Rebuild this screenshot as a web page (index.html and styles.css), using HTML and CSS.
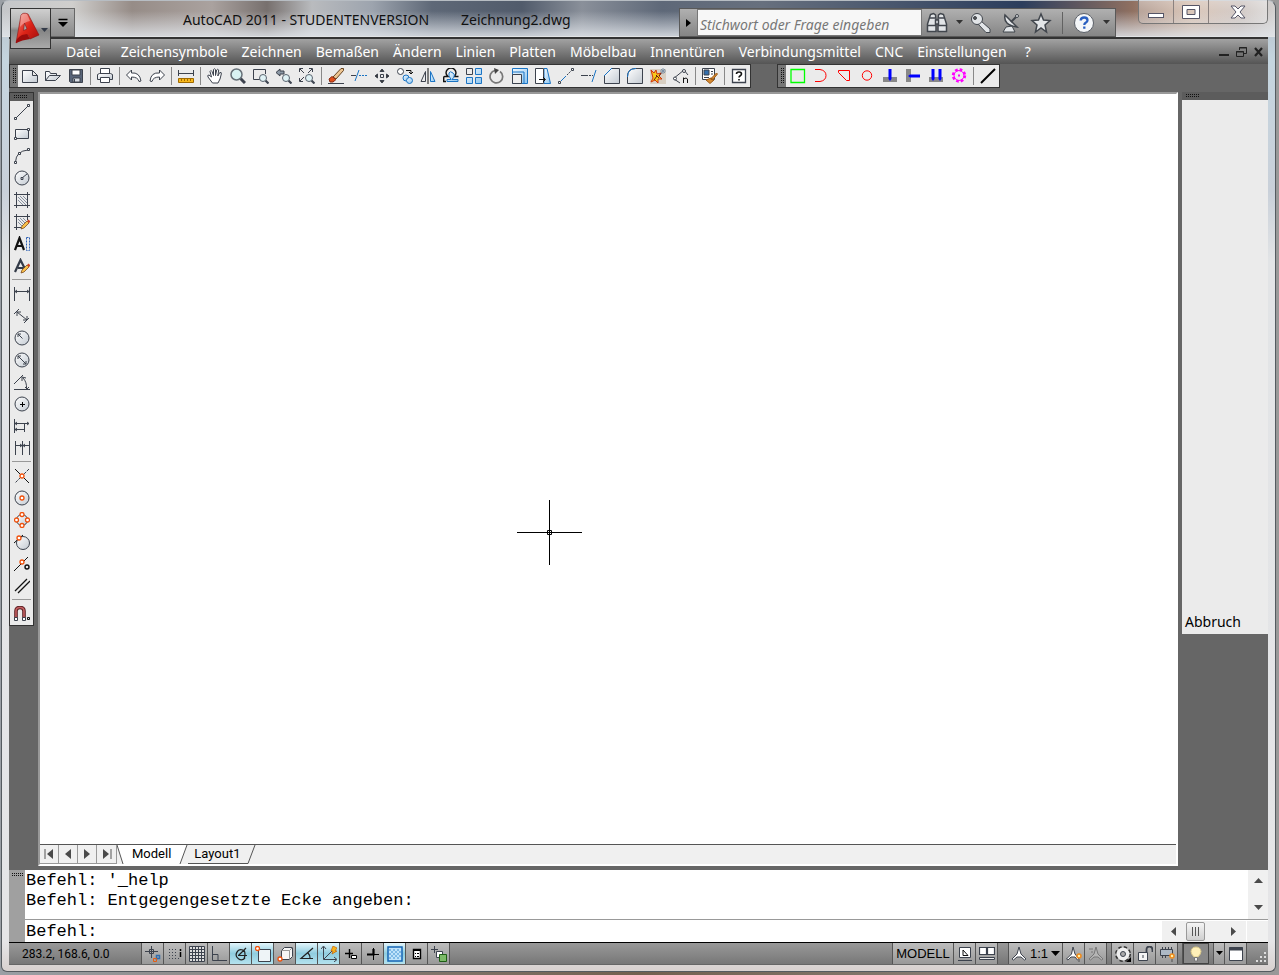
FILE: index.html
```html
<!DOCTYPE html>
<html lang="de">
<head>
<meta charset="utf-8">
<title>AutoCAD 2011 - STUDENTENVERSION</title>
<link rel="stylesheet" href="styles.css">
</head>
<body>
<svg class="defs" aria-hidden="true"><defs>
<linearGradient id="steel" x1="0" y1="0" x2="1" y2="1"><stop offset="0" stop-color="#fff"/><stop offset="1" stop-color="#c3cad2"/></linearGradient>
<linearGradient id="red" x1="0" y1="0" x2="1" y2="1"><stop offset="0" stop-color="#f58c80"/><stop offset=".5" stop-color="#dd2418"/><stop offset="1" stop-color="#a00c0c"/></linearGradient>
<linearGradient id="blue" x1="0" y1="0" x2="1" y2="1"><stop offset="0" stop-color="#f4faff"/><stop offset="1" stop-color="#8cc4ee"/></linearGradient>
<g id="pencil"><path d="M7 15l1-3 5-5 2 2-5 5z" fill="#f9c04a" stroke="#6b3a10" stroke-width=".7"/><path d="M13 7l1.500-1.500 2 2L15 9z" fill="#d2431d" stroke="none"/></g>
<g id="node"><circle r="2" fill="#fff" stroke="#f0500a" stroke-width="1.300"/></g>
<g id="lens"><path d="M2.500 2.500l3 3" stroke="#3f4652" stroke-width="2.200"/><circle r="3.500" fill="#dff2f5" stroke="#59636e"/></g>
</defs></svg>
<div class="window">
  <header class="titlebar">
    <button class="app-button" aria-label="Anwendungsmenü">
      <svg width="38" height="38" viewBox="0 0 38 38"><path d="M4 33L9 5Q11 2 16 4L27 25 18 29 16 25 12 27z" fill="url(#red)" stroke="#8c1010" stroke-width=".6"/><path d="M12.500 13l2.500 6-3.500 1.500z" fill="#a9a9a9" stroke="#8c1010" stroke-width=".6"/><path d="M4 33q0-5 6-8l5-1 3 5q-8 1-14 4z" fill="#9c0c0c" stroke="none"/><path d="M9 5q3-2 6-1l3 7q-6 1-10 6z" fill="#fff" opacity=".35" stroke="none"/><path d="M29 18h7l-3.500 4z" fill="#333a48" stroke="none"/></svg>
    </button>
    <button class="quick" aria-label="Schnellzugriff anpassen"><svg width="12" height="12"><path d="M1.500 2.500h9" stroke="#000" stroke-width="1.500"/><path d="M1 5h10l-5 5z" fill="#000" stroke="none"/></svg></button>
    <h1 class="title"><span>AutoCAD 2011 - STUDENTENVERSION</span><span>Zeichnung2.dwg</span></h1>
    <div class="info">
      <button class="info-arrow" aria-label="Suche einklappen"><svg width="8" height="10"><path d="M1 1l5 4-5 4z" fill="#000" stroke="none"/></svg></button>
      <input class="search" type="text" placeholder="Stichwort oder Frage eingeben" aria-label="Stichwort oder Frage eingeben">
      <button class="info-btn" aria-label="Suchen"><svg width="22" height="22" viewBox="0 0 22 22" class="metal"><path d="M4.500 2.500l3-1 2 1.500.5 5v11.500H1.500V12zM17.500 2.500l-3-1-2 1.500-.5 5v11.500h8.500V12z" stroke-width="1.500"/><path d="M1.500 13.500H10M12 13.500h8.500M4 6h5M13 6h5M9.500 8h3v4h-3z" stroke-width="1.500"/></svg></button>
      <button class="drop" aria-label="Suchoptionen"><svg width="7" height="5"><path d="M0 0h7l-3.500 4z" fill="#333" stroke="none"/></svg></button>
      <button class="info-btn" aria-label="Subscription"><svg width="22" height="22" viewBox="0 0 22 22" class="metal"><path d="M11 9l9 8v3.500h-4L8 12z"/><circle cx="7" cy="7" r="5.500"/><circle cx="5" cy="6" r="1.500" fill="#555"/></svg></button>
      <button class="info-btn" aria-label="Kommunikations-Center"><svg width="22" height="22" viewBox="0 0 22 22" class="metal"><path d="M3 20l3-5 6-1 3 6z"/><path d="M5 3q-2 10 12 12z" stroke-width="1.500"/><path d="M11 10l6-6" stroke-width="2"/><circle cx="17" cy="4" r="1.500"/></svg></button>
      <button class="info-btn" aria-label="Favoriten"><svg width="22" height="22" viewBox="0 0 22 22" class="metal"><path d="M11 2l2.500 6 6.500.5-5 4.500 1.500 7-5.500-4-5.500 4L7 13 2 8.500 8.500 8z" stroke-width="1.500"/></svg></button>
      <span class="info-sep"></span>
      <button class="info-btn" aria-label="Hilfe"><svg width="22" height="22" viewBox="0 0 22 22"><circle cx="11" cy="11" r="9.500" fill="#f4f6f8" stroke="#5b6068"/><path d="M7.700 8.500q.2-3 3.500-3t3.300 2.700q0 1.600-1.800 2.600-1.400.8-1.400 2.200M11.300 14.500v2.300" stroke="#2a5fc0" stroke-width="2.300"/></svg></button>
      <button class="drop" aria-label="Hilfemenü"><svg width="7" height="5"><path d="M0 0h7l-3.500 4z" fill="#333" stroke="none"/></svg></button>
    </div>
    <div class="sysbuttons">
      <button aria-label="Minimieren"><svg width="18" height="14"><rect x="1.500" y="8.500" width="15" height="4" fill="#fff" stroke="#556"/></svg></button>
      <button aria-label="Maximieren"><svg width="18" height="14"><path d="M.5.500h17v13H.500zM5 4.500v5h8v-5z" fill="#fff" fill-rule="evenodd" stroke="#556"/></svg></button>
      <button class="close" aria-label="Schließen"><svg width="16" height="14"><path d="M1 1h4l3 3 3-3h4l-5 6 5 6h-4l-3-3-3 3H1l5-6z" fill="#fff" stroke="#556"/></svg></button>
    </div>
  </header>

  <nav class="menu">
    <a href="#">Datei</a><a href="#">Zeichensymbole</a><a href="#">Zeichnen</a><a href="#">Bemaßen</a><a href="#">Ändern</a><a href="#">Linien</a><a href="#">Platten</a><a href="#">Möbelbau</a><a href="#">Innentüren</a><a href="#">Verbindungsmittel</a><a href="#">CNC</a><a href="#">Einstellungen</a><a href="#">?</a>
    <div class="doc-buttons">
      <button aria-label="Zeichnung minimieren"><svg width="12" height="12"><path d="M1 9h10" stroke="#222" stroke-width="2"/></svg></button>
      <button aria-label="Zeichnung wiederherstellen"><svg width="13" height="12"><path d="M4.500 4V1.500h7v6H9M4 2h8M1.500 5.500h7v5h-7zM1 6h8" stroke="#222"/></svg></button>
      <button aria-label="Zeichnung schließen"><svg width="12" height="12"><path d="M2 2l7 8M9 2l-7 8" stroke="#222" stroke-width="2.200"/></svg></button>
    </div>
  </nav>

  <div class="toolbars">
    <div class="toolbar" role="toolbar" aria-label="Standard">
      <span class="grip"></span>
      <button aria-label="Neu"><svg class="i" viewBox="0 0 16 16"><path d="M.5 2.500h10l5 5v7H.500zM10.500 2.500v5h5" fill="url(#steel)"/></svg></button>
      <button aria-label="Öffnen"><svg class="i" viewBox="0 0 16 16"><path d="M.5 12.500v-9h4l1 2h6v2M.5 12.500l4-5h11l-5 5z" fill="url(#steel)"/></svg></button>
      <button aria-label="Speichern"><svg class="i" viewBox="0 0 16 16"><path d="M1.500 1.500h13v13h-12l-1-1z" fill="#596579"/><path d="M4 2h8v5H4z" fill="#fff"/><path d="M5 10h7v4H5z" fill="#d9dee5"/><path d="M6.500 11v3"/></svg></button>
      <span class="sep"></span>
      <button aria-label="Plotten"><svg class="i" viewBox="0 0 16 16"><path d="M3.500 6V.5h9V6" fill="#fff"/><path d="M.5 6.500l2-1h11l2 1v5H.500z" fill="url(#steel)"/><path d="M3.500 9.500h9v5h-9z" fill="#fff"/></svg></button>
      <span class="sep"></span>
      <button aria-label="Zurück"><svg class="i" viewBox="0 0 16 16"><path d="M.5 7l5-5v3q8-1 9.500 8l-2 .5Q12 9 5.500 9v3z" fill="#fff"/></svg></button>
      <button aria-label="Wiederherstellen"><svg class="i" viewBox="0 0 16 16"><path d="M15.500 7l-5-5v3Q2 4 1 13l2 .5Q4 9 10.500 9v3z" fill="#fff"/></svg></button>
      <span class="sep"></span>
      <button aria-label="Abstand"><svg class="i" viewBox="0 0 16 16"><path d="M.5 2v6M15.500 2v6M1 5.500h14"/><path d="M.5 10.500h15v4H.500z" fill="#f7b81c" stroke="#a06a00"/><path d="M3.500 11v2M6.500 11v2M9.500 11v2M12.500 11v2" stroke="#a06a00"/></svg></button>
      <span class="sep"></span>
      <button aria-label="Pan"><svg class="i" viewBox="0 0 16 16"><path d="M5.500 15L1 9q-1-2 1-2l2.500 2L3 3.500q1-2 2 0l1.500 4v-6q1-1.500 2 0v6l1.200-5.500q1-1.500 2 0L10.800 8l2-3.500q2-.5 1.500 1.500L13 11l-2 4z" fill="#fff"/></svg></button>
      <button aria-label="Zoom Echtzeit"><svg class="i" viewBox="0 0 16 16"><path d="M10.500 10.500l4.500 4.500" stroke-width="3"/><circle cx="6.500" cy="6.500" r="5.500" fill="#d8f2f3" stroke="#667078" stroke-width="1.500"/></svg></button>
      <button aria-label="Zoom Fenster"><svg class="i" viewBox="0 0 16 16"><path d="M7 11.500H.500v-10h12V6"/><use href="#lens" x="10" y="10"/></svg></button>
      <button aria-label="Zoom Vorher"><svg class="i" viewBox="0 0 16 16"><path d="M0 4.500L4 1v2h4v3H4v2z" fill="#8b98a5"/><use href="#lens" x="10" y="10"/></svg></button>
      <button aria-label="Zoom Grenzen"><svg class="i" viewBox="0 0 16 16"><path d="M1 1l4 4M13 1L9 5M5 9l-4 4M.5 4V.500H4M10 .5h3.500V4M.5 10v3.500H4"/><use href="#lens" x="10" y="10"/></svg></button>
      <span class="sep"></span>
      <button aria-label="Löschen"><svg class="i" viewBox="0 0 16 16"><path d="M0 15.500h16"/><path d="M5 9l8-8.500h2.500v2L8 11z" fill="#edc592" stroke="#654321"/><path d="M1 11l3-2.500 4 3L5 14H2z" fill="#e0501c" stroke="#8a2a10"/></svg></button>
      <button aria-label="Stutzen"><svg class="i" viewBox="0 0 16 16"><path d="M0 7.500h5"/><path d="M8 2L4 13" class="b"/><path d="M8 7.500h8" class="b" stroke-dasharray="2 1"/></svg></button>
      <button aria-label="Schieben"><svg class="i" viewBox="0 0 16 16"><path d="M6 3.500L8 1l2 2.500zM6 12.500L8 15l2-2.500zM3.500 6L1 8l2.500 2zM12.500 6L15 8l-2.500 2z" fill="#333"/><path d="M6.500 6.500h3v3h-3z"/></svg></button>
      <button aria-label="Kopieren"><svg class="i" viewBox="0 0 16 16"><circle cx="3.500" cy="3.500" r="3" fill="#fff"/><path d="M9 2.500h5v3M12 4l2 2 2-2" stroke="#111"/><circle cx="9" cy="10" r="3" fill="url(#blue)" class="b"/><circle cx="12.500" cy="12.500" r="3" fill="url(#blue)" class="b"/></svg></button>
      <button aria-label="Spiegeln"><svg class="i" viewBox="0 0 16 16"><path d="M1 13.500h4.500v-10z"/><path d="M8 0v16" stroke="#111"/><path d="M15 13.500h-4.500v-10z" fill="url(#blue)" class="b"/></svg></button>
      <button aria-label="Versetzen"><svg class="i" viewBox="0 0 16 16"><path d="M3 13.500H.700V9.500q0-1 1-1H5q-2-2-2-3.500a5 5 0 0 1 10 0q0 1.500-2 3.500h4.500" stroke="#111" stroke-width="1.400"/><path d="M4 13.500v-2h4q-3-4-2-6.500t4 0-1 6.500H15v2z" fill="url(#blue)" class="b"/></svg></button>
      <button aria-label="Reihe"><svg class="i" viewBox="0 0 16 16"><path d="M.5.500h6v6h-6z"/><path d="M9.500.500h6v6h-6zM.5 9.500h6v6h-6zM9.500 9.500h6v6h-6z" fill="url(#blue)" class="b"/></svg></button>
      <button aria-label="Drehen"><svg class="i" viewBox="0 0 16 16"><path d="M11 3.500A6.300 6.300 0 1 1 6 2.500" stroke="#777" stroke-width="1.700"/><path d="M5 0l5 2-4 4z" fill="#444" stroke="none"/></svg></button>
      <button aria-label="Varia"><svg class="i" viewBox="0 0 16 16"><path d="M.5.500h15v15H.500z" fill="url(#blue)" class="b"/><path d="M.5 6.500h9v9h-9z" fill="#eee"/><path d="M1 4h11v11" class="b"/></svg></button>
      <button aria-label="Strecken"><svg class="i" viewBox="0 0 16 16"><path d="M9 .5h3l3.500 15H9z" fill="url(#blue)" class="b"/><path d="M.5.500h8v15h-8z" fill="#fff"/><path d="M4 11.500h6M8 9l2.500 2.500L8 14" stroke="#111"/></svg></button>
      <button aria-label="Strecke bearbeiten"><svg class="i" viewBox="0 0 16 16"><path d="M3 13l5-5" class="b"/><path d="M9 7l4-4" stroke-dasharray="2 1"/><path d="M.5 13.500h2v2h-2zM13.500.500h2v2h-2z" fill="#fff"/></svg></button>
      <button aria-label="Dehnen"><svg class="i" viewBox="0 0 16 16"><path d="M0 7.500h5"/><path d="M5 7.500h7" stroke-dasharray="2 1"/><path d="M15 2l-4 12" class="b"/></svg></button>
      <button aria-label="Fase"><svg class="i" viewBox="0 0 16 16"><path d="M.5 15.500v-8l7-7h8v15z" fill="url(#steel)"/><path d="M0 8L8 0" class="b"/></svg></button>
      <button aria-label="Abrunden"><svg class="i" viewBox="0 0 16 16"><path d="M.5 15.500v-7q0-8 8-8h7v15z" fill="url(#steel)"/><path d="M.5 9q0-8.500 8.500-8.500" class="b"/></svg></button>
      <button aria-label="Ursprung"><svg class="i" viewBox="0 0 16 16"><path d="M0 1h16v15H0z" fill="#d8cfc2" stroke="none"/><path d="M1 2l3 3 2-3 1 4 4-1-2 3 3 3-4 0 0 4-3-3-4 2 2-4z" fill="#f7c91a" stroke="#d2330c"/><path d="M6 7l3 3M4 12l3-4M9 8l3-4" stroke="#60190a"/><path d="M11 1l4 4M15 1l-4 4M13 0v6M10 3h6" stroke="#7e93a8"/></svg></button>
      <button aria-label="Messen"><svg class="i" viewBox="0 0 16 16"><path d="M0 11L11 2M11 2l4 5M1 11l6 4"/><circle cx="11" cy="3" r="1.500" fill="#fff"/><circle cx="2" cy="10.500" r="1.500" fill="#fff"/><path d="M10.500 15V9.500M10.500 11q3-2 4 0v4" stroke="#111"/></svg></button>
      <span class="sep"></span>
      <button aria-label="Eigenschaften anpassen"><svg class="i" viewBox="0 0 16 16"><path d="M.5.500h12v11H.500z" fill="#fff"/><path d="M2 2h5v5H2z" fill="#336fad"/><path d="M9 3.500h2M9 6h2M2 9.500h5"/><path d="M14.500 5l1 1-5 6-2-1zM4 12l5-2 3 2-4 3.500z" fill="#d68b32" stroke="#9b5a18"/></svg></button>
      <span class="sep"></span>
      <button aria-label="Hilfe"><svg class="i" viewBox="0 0 16 16"><path d="M1.500 1.500h13v13h-13z" fill="#fff" stroke-width="1.300"/><path d="M5.500 6q0-2 2.500-2t2.500 2q0 1-1.200 1.700T8 9.500M8 11v1.500" stroke="#111" stroke-width="1.600"/></svg></button>
    </div>
    <div class="toolbar" role="toolbar" aria-label="CNC">
      <span class="grip"></span>
      <button aria-label="Rechteck"><svg class="i" viewBox="0 0 16 16"><path d="M1 1.500h13.500v13H1z" stroke="#0f0" stroke-width="1.300"/></svg></button>
      <button aria-label="Bogenkontur"><svg class="i r" viewBox="0 0 16 16"><path d="M2 1.500h5q6 1 6 6t-6 6H2"/></svg></button>
      <button aria-label="Kontur"><svg class="i r" viewBox="0 0 16 16"><path d="M2.500 2.500h11v10h-3l-8-8z"/></svg></button>
      <button aria-label="Kreis"><svg class="i r" viewBox="0 0 16 16"><circle cx="8" cy="7.500" r="4.700"/></svg></button>
      <button aria-label="Bohrung vertikal"><svg class="i" viewBox="0 0 16 16"><path d="M1 9h14v5H1z" fill="#888" stroke="none"/><path d="M6.500 1h3v10l-1.500 2-1.500-2z" fill="#00f" stroke="none"/></svg></button>
      <button aria-label="Bohrung horizontal"><svg class="i" viewBox="0 0 16 16"><path d="M1 1h5v13H1z" fill="#888" stroke="none"/><path d="M15 6.500H5L3 8l2 1.500h10z" fill="#00f" stroke="none"/></svg></button>
      <button aria-label="Bohrreihe"><svg class="i" viewBox="0 0 16 16"><path d="M1 9h14v5H1z" fill="#888" stroke="none"/><path d="M3.500 1h3v10L5 13l-1.500-2zM10.500 1h3v10L12 13l-1.500-2z" fill="#00f" stroke="none"/></svg></button>
      <button aria-label="CNC-Einstellungen"><svg class="i" viewBox="0 0 16 16"><circle cx="8" cy="7.500" r="5.800" stroke="#f0f" stroke-width="2.800" stroke-dasharray="2.600 1.950"/><circle cx="8" cy="7.500" r="5" stroke="#f0f"/><path d="M7 6.500h2v2H7z" fill="#f0f" stroke="none"/></svg></button>
      <span class="sep"></span>
      <button aria-label="Linie"><svg class="i" viewBox="0 0 16 16"><path d="M1 15L15 1" stroke="#000" stroke-width="2"/></svg></button>
    </div>
  </div>

  <main class="work">
    <div class="tools" role="toolbar" aria-label="Zeichnen">
      <span class="grip wide"></span>
      <button aria-label="Linie"><svg class="i" viewBox="0 0 16 16"><path d="M2 14L14 2"/><path d="M.5 13.500h2v2h-2zM13.500.500h2v2h-2z" fill="#fff"/></svg></button>
      <button aria-label="Rechteck"><svg class="i" viewBox="0 0 16 16"><path d="M1.500 3.500h13v9h-13z" fill="url(#steel)"/><path d="M.5 11.500h2v2h-2zM13.500 2.500h2v2h-2z" fill="#fff"/></svg></button>
      <button aria-label="Bogen"><svg class="i" viewBox="0 0 16 16"><path d="M1.500 14Q2 3 14 2"/><path d="M.5 13.500h2v2h-2zM4.500 4.500h2v2h-2zM13.500.500h2v2h-2z" fill="#fff"/></svg></button>
      <button aria-label="Kreis"><svg class="i" viewBox="0 0 16 16"><circle cx="8" cy="8" r="7" fill="url(#steel)"/><path d="M8 8l5-4M7 7.500h2v2H7z"/></svg></button>
      <button aria-label="Schraffur"><svg class="i" viewBox="0 0 16 16"><path d="M0 2.500h16M2.500 0v16M13.500 0v16M0 13.500h16"/><path d="M4 8l5 5M4 5l8 8M6 4l7 7M9 4l4 4" stroke="#8791a0"/></svg></button>
      <button aria-label="Schraffur bearbeiten"><svg class="i" viewBox="0 0 16 16"><path d="M0 2.500h16M2.500 0v16M13.500 0v6M0 13.500h7"/><path d="M4 8l4 4M4 5l5 5M6 4l5 5M9 4l3 3" stroke="#8791a0"/><use href="#pencil"/></svg></button>
      <button aria-label="Absatztext"><svg class="i" viewBox="0 0 16 16"><path d="M1 14L5.500 2 10 14M3 10h5" stroke="#111" stroke-width="2.200"/><path d="M12.500 1.500h3v13h-3z" stroke="#2f62b5" stroke-dasharray="2 1"/></svg></button>
      <button aria-label="Text bearbeiten"><svg class="i" viewBox="0 0 16 16"><path d="M1 14L6.500 2 11 11M4 10h5" stroke="#333b48" stroke-width="2.200"/><use href="#pencil"/></svg></button>
      <span class="hsep"></span>
      <button aria-label="Lineare Bemaßung"><svg class="i" viewBox="0 0 16 16"><path d="M.5 1v14M15.500 1v14M1 5.500h14M3 4L1 5.500 3 7M13 4l2 1.500L13 7"/></svg></button>
      <button aria-label="Ausgerichtete Bemaßung"><svg class="i" viewBox="0 0 16 16"><path d="M0 6l5-5M10 15l5-5M3 4l10 8M3 4v4M3 4h4M13 12H9M13 12V8"/></svg></button>
      <button aria-label="Radius"><svg class="i" viewBox="0 0 16 16"><circle cx="8" cy="8" r="7" fill="url(#steel)"/><path d="M8.500 8.500L4 4M4 7V4h3"/></svg></button>
      <button aria-label="Durchmesser"><svg class="i" viewBox="0 0 16 16"><circle cx="8" cy="8" r="7" fill="url(#steel)"/><path d="M4 4l8 8M4 7V4h3M12 9v3H9"/></svg></button>
      <button aria-label="Winkel"><svg class="i" viewBox="0 0 16 16"><path d="M0 15.500h16M0 10l9-9M9 4q4 4 3.500 11M8 7V3l4 1M11 13l2 2 2-2"/></svg></button>
      <button aria-label="Zentrum"><svg class="i" viewBox="0 0 16 16"><circle cx="8" cy="8" r="7" fill="url(#steel)"/><path d="M8.500 6v5M6 8.500h5" stroke="#000"/></svg></button>
      <button aria-label="Basislinie"><svg class="i" viewBox="0 0 16 16"><path d="M.5 1v14M1 5.500h14M1 11.500h10M10.500 6v8M3 4L1 5.500 3 7M3 10l-2 1.500L3 13M13 4l2 1.500L13 7"/></svg></button>
      <button aria-label="Weiterführen"><svg class="i" viewBox="0 0 16 16"><path d="M1.500 1v14M8.500 1v14M15.500 1v14M1.500 5.500h14M6 4l2 1.500L6 7M11 4L9 5.500 11 7"/></svg></button>
      <span class="hsep"></span>
      <button aria-label="Schnittpunkt"><svg class="i" viewBox="0 0 16 16"><path d="M1 1l14 14" stroke="#111"/><path d="M15 1L1 15" stroke-dasharray="3 1"/><use href="#node" x="8" y="8"/></svg></button>
      <button aria-label="Mittelpunkt"><svg class="i" viewBox="0 0 16 16"><circle cx="8" cy="8" r="7" fill="url(#steel)"/><use href="#node" x="8" y="8"/></svg></button>
      <button aria-label="Quadrant"><svg class="i" viewBox="0 0 16 16"><circle cx="8" cy="8" r="5.500" fill="url(#steel)"/><use href="#node" x="8" y="2.500"/><use href="#node" x="8" y="13.500"/><use href="#node" x="2.500" y="8"/><use href="#node" x="13.500" y="8"/></svg></button>
      <button aria-label="Tangente"><svg class="i" viewBox="0 0 16 16"><circle cx="9" cy="9" r="6.500" fill="url(#steel)"/><path d="M0 9l9-8" stroke="#111"/><use href="#node" x="5" y="4"/></svg></button>
      <button aria-label="Nächster"><svg class="i" viewBox="0 0 16 16"><path d="M0 15L14 1" stroke="#111"/><use href="#node" x="8" y="6"/><circle cx="13" cy="11" r="2" stroke="#111" stroke-width="1.400"/></svg></button>
      <button aria-label="Parallele"><svg class="i" viewBox="0 0 16 16"><path d="M1 13L13 1M4 15L16 3" stroke="#111" stroke-width="1.300"/></svg></button>
      <span class="hsep"></span>
      <button aria-label="Objektfang"><svg class="i" viewBox="0 0 16 16"><path d="M2 14V5q0-3.500 4-3.500T10 5v9" stroke="#5b2024" stroke-width="3.600"/><path d="M2 14V5q0-3.500 4-3.500T10 5v9" stroke="#c46062" stroke-width="1.600"/><path d="M.5 11.500h3v3h-3zM8.500 11.500h3v3h-3z" fill="#fff"/><path d="M13.500 11.500h2v2h-2z" stroke="#111"/></svg></button>
    </div>

    <section class="drawing">
      <div class="canvas">
        <svg class="cursor" width="65" height="65"><path d="M0 32.500h30M35 32.500h30M32.500 0v30M32.500 35v30M30.500 30.500h4v4h-4zM31 32.500h3M32.500 31v3" stroke="#000"/></svg>
      </div>
      <div class="tabs">
        <button class="nav" aria-label="Erstes Layout"><svg width="12" height="12"><path d="M2 1v10" stroke="#555"/><path d="M10 1v10L4 6z" class="tri"/></svg></button>
        <button class="nav" aria-label="Vorheriges Layout"><svg width="12" height="12"><path d="M9 1v10L3 6z" class="tri"/></svg></button>
        <button class="nav" aria-label="Nächstes Layout"><svg width="12" height="12"><path d="M3 1v10l6-5z" class="tri"/></svg></button>
        <button class="nav" aria-label="Letztes Layout"><svg width="12" height="12"><path d="M2 1v10l6-5z" class="tri"/><path d="M10 1v10" stroke="#555"/></svg></button>
        <svg class="edge" width="7" height="19"><path d="M0 0l6 19h1V0z" fill="#fff" stroke="none"/><path d="M0 0l6 19" stroke="#555"/></svg>
        <button class="tab active">Modell</button>
        <svg class="edge" width="9" height="19"><path d="M0 0h8L1 19H0z" fill="#fff" stroke="none"/><path d="M8 0L1 19" stroke="#555"/></svg>
        <button class="tab">Layout1</button>
        <svg class="edge" width="9" height="19"><path d="M8 0L1 18.500H0" stroke="#555"/></svg>
      </div>
    </section>

    <aside class="panel"><span class="grip wide"></span><div class="panel-body"><button>Abbruch</button></div></aside>
  </main>

  <section class="command">
    <div class="command-grip"><span></span></div>
    <div class="command-main">
      <div class="history">
        <div class="log"><p>Befehl: '_help</p><p>Befehl: Entgegengesetzte Ecke angeben:</p></div>
        <div class="vscroll"><svg width="9" height="6"><path d="M0 5h9L4.500 0z" class="tri"/></svg><svg width="9" height="6"><path d="M0 0h9L4.500 5z" class="tri"/></svg></div>
      </div>
      <div class="prompt">
        <label for="cmd">Befehl:</label><input id="cmd" type="text">
        <div class="hscroll"><svg width="6" height="9"><path d="M5 0v9L0 4.500z" class="tri"/></svg><span class="thumb"></span><svg width="6" height="9"><path d="M0 0v9l5-4.500z" class="tri"/></svg></div>
        <span class="corner"></span>
      </div>
    </div>
  </section>

  <footer class="status">
    <output class="coords">283.2, 168.6, 0.0</output>
    <div class="group">
      <button aria-label="Abhängigkeiten ableiten"><svg class="i" viewBox="0 0 16 16"><path d="M6.500 0v12M0 5.500h13M4.500 3.500h4v4h-4z"/><path d="M11.500 14V9.500h3v3h-3" stroke="#2d6cae" stroke-width="1.500"/><path d="M8.500 12.500h3v3h-3z" stroke="#e65c12"/></svg></button>
      <button aria-label="Fangmodus"><svg class="i" viewBox="0 0 16 16"><path d="M2 3.500h9M2 6.500h9M2 9.500h9M2 12.500h11" stroke-dasharray="1 2"/><path d="M13.500 3v8" stroke="#000" stroke-width="1.500" stroke-dasharray="2 1 5"/></svg></button>
      <button aria-label="Raster"><svg class="i" viewBox="0 0 16 16"><path d="M.5.500h15v15H.500zM3.500 0v16M6.500 0v16M9.500 0v16M12.500 0v16M0 3.500h16M0 6.500h16M0 9.500h16M0 12.500h16" fill="#ddd"/></svg></button>
      <button aria-label="Ortho"><svg class="i" viewBox="0 0 16 16"><path d="M1.500 0v14.500H16M2 8.500h5v6"/></svg></button>
      <button class="on" aria-label="Spurverfolgung"><svg class="i" viewBox="0 0 16 16"><path d="M12 12a5 5 0 1 1-2-8M5.500 9.500L13 2M5 9.500h9M11 4q2 4 0 9" stroke="#222" stroke-width="1.200"/></svg></button>
      <button class="on" aria-label="Objektfang"><svg class="i" viewBox="0 0 16 16"><path d="M3.500 3.500h12v12h-12z" fill="#eef4f7"/><use href="#node" x="2.500" y="2.500"/></svg></button>
      <button aria-label="3D-Objektfang"><svg class="i" viewBox="0 0 16 16"><path d="M4.500 4.500l3-3h8v9l-3 3h-8z" fill="#f6f6f6"/><path d="M4.500 4.500h8v9M12.500 4.500l3-3" stroke="#999"/><use href="#node" x="3" y="13"/></svg></button>
      <button class="on" aria-label="Objektfangspur"><svg class="i" viewBox="0 0 16 16"><path d="M14 2L2 12.500h12M9 7q2 2 2 5" stroke="#222" stroke-width="1.200"/></svg></button>
      <button class="on" aria-label="Dynamisches BKS"><svg class="i" viewBox="0 0 16 16"><path d="M2.500 1v12.500H15M0 3l2.500-3L5 3M13 11l3 2.500-3 2.500M3 13l8-8"/><path d="M12 0l4 2-2 3h2l-5 3 1-3h-2z" fill="#f8b51a" stroke="#c26008" stroke-width=".7"/></svg></button>
      <button aria-label="Dynamische Eingabe"><svg class="i" viewBox="0 0 16 16"><path d="M6.500 3v9M2 7.500h8" stroke="#000" stroke-width="1.400"/><path d="M8.500 9.500h5v3h-5z" fill="#fff" stroke="#000"/></svg></button>
      <button aria-label="Linienstärke"><svg class="i" viewBox="0 0 16 16"><path d="M8.500 2v12M8 8.500h6" stroke="#000"/><path d="M2 8.500h6.500V3" stroke="#000" stroke-width="2.200"/></svg></button>
      <button class="on" aria-label="Transparenz"><svg class="i" viewBox="0 0 16 16"><path d="M1 1h14v14H1z" fill="#bfe3fa" stroke="#1464b4" stroke-width="1.500"/><path d="M2 4h12M2 8h12M2 12h12" stroke="#7db9e6" stroke-width="2" stroke-dasharray="2 2"/><path d="M4 6h10M4 10h10" stroke="#7db9e6" stroke-width="2" stroke-dasharray="2 2"/></svg></button>
      <button aria-label="Schnelleigenschaften"><svg class="i" viewBox="0 0 16 16"><path d="M4.500 3.500h7v9h-7z" fill="#fff" stroke="#000" stroke-width="1.400"/><path d="M5 4.500h6M6 7.500h1M8 7.500h2M6 10.500h1M8 10.500h2" stroke="#000"/></svg></button>
      <button aria-label="Auswahlzyklus"><svg class="i" viewBox="0 0 16 16"><path d="M3.500 0v7M0 3.500h7"/><path d="M5.500 5.500h6v6h-6z" fill="#fff"/><path d="M8.500 8.500h7v7h-7z" fill="#7cba68" stroke="#1d5e14"/></svg></button>
    </div>
    <div class="group right">
      <button class="text">MODELL</button>
      <button aria-label="Layout"><svg class="i" viewBox="0 0 16 16"><path d="M2.500 1.500h11v10h-11z" fill="#fff"/><path d="M6 4v5.500h5z" stroke="#111"/><path d="M1 14.500h14"/></svg></button>
      <button aria-label="Layouts"><svg class="i" viewBox="0 0 16 16"><path d="M.5 1.500h7v7h-7zM8.500 1.500h7v7h-7z" fill="#fff" stroke-width="1.200"/><path d="M.5 11.500h15v2H.500z" fill="#eee"/></svg></button>
    </div>
    <div class="group">
      <button class="scale"><svg class="i" viewBox="0 0 16 16"><path d="M8 1l2 7 5 5-1.500 1-3.500-3H6l-3.500 3L1 13l5-5z" fill="#fff"/></svg>1:1<svg width="9" height="6"><path d="M0 0h9L4.500 5z" fill="#000" stroke="none"/></svg></button>
      <button aria-label="Beschriftung"><svg class="i" viewBox="0 0 16 16"><path d="M7 1l2 7 4 5-1.500 1-2.500-3H5l-3 3-1.500-1 5-5z" fill="#fff"/><circle cx="13" cy="10" r="2" fill="#fff0a8" stroke="#f08a1a" stroke-width="1.500"/><path d="M13 13v3" stroke="#777" stroke-width="2"/></svg></button>
      <button aria-label="Automatische Skalierung"><svg class="i" viewBox="0 0 16 16"><path d="M8 1l2 7 5 5-1.500 1-3.500-3H6l-3.500 3L1 13l5-5z" stroke="#777" fill="#b5b5b5"/><path d="M1 3h4M3 6h2" stroke="#777"/></svg></button>
    </div>
    <div class="group near">
      <button aria-label="Arbeitsbereich"><svg class="i" viewBox="0 0 16 16"><circle cx="8" cy="8" r="6.500" stroke="#333" stroke-width="3" stroke-dasharray="3 2.100"/><circle cx="8" cy="8" r="5.500" fill="#eee" stroke="#eee" stroke-width="2"/><circle cx="8" cy="8" r="2.500" fill="#aaa"/><path d="M16 11v5h-5z" fill="#000" stroke="none"/></svg></button>
      <button aria-label="Sperren"><svg class="i" viewBox="0 0 16 16"><path d="M9.500 8V4q0-3.500 3-3.500t3 3.500v2" stroke-width="1.800"/><path d="M1.500 6.500h9v8h-9z" fill="#f4f4f4"/><path d="M6 9v3"/></svg></button>
      <button aria-label="Hardwarebeschleunigung"><svg class="i" viewBox="0 0 16 16"><path d="M1.500 3.500h12v6h-12z" fill="#adb9c6"/><path d="M3.500 1v2M6.500 1v2M9.500 1v2M12.500 1v2M3.500 10v2M6.500 10v2"/><circle cx="13" cy="10" r="2" fill="#fff0a8" stroke="#f08a1a" stroke-width="1.500"/><path d="M13 13v3" stroke="#777" stroke-width="2"/></svg></button>
    </div>
    <div class="group near">
      <button class="bulb" aria-label="Objekte isolieren"><svg class="i" viewBox="0 0 16 16"><path d="M6 11Q3 8 3 5.500 3.500 1 8 1t5 4.500Q13 8 10 11z" fill="#fff0b8" stroke="#d8c88a"/><path d="M6.500 11.500h3v3.500h-3z" fill="#eee" stroke="#777"/></svg></button>
    </div>
    <div class="group near">
      <button class="mini" aria-label="Statusleistenmenü"><svg width="7" height="5"><path d="M0 0h7L3.500 4z" fill="#000" stroke="none"/></svg></button>
      <button aria-label="Vollbild"><svg class="i" viewBox="0 0 16 16"><path d="M1.500 1.500h13v13h-13z" fill="#fff"/><path d="M1 3h14" stroke-width="3"/></svg></button>
      <span class="resize"><svg width="14" height="14"><path d="M10 3h2M6 7h2M10 7h2M2 11h2M6 11h2M10 11h2" stroke="#ddd" stroke-width="2"/></svg></span>
    </div>
  </footer>
</div>
</body>
</html>
```
FILE: styles.css
```css
* { box-sizing: border-box; }
html, body { height: 100%; }
body {
  margin: 0;
  padding: 0 3px 3px 1px;
  background: linear-gradient(90deg, #9a9fa5, #73604f 50%, #999);
  font: 14px/20px "Noto Sans", "Open Sans", sans-serif;
  overflow: hidden;
}
button, input { margin: 0; padding: 0; border: 0; background: none; font: inherit; color: inherit; }
button { display: flex; align-items: center; justify-content: center; }
svg { display: block; flex: none; fill: none; stroke: #3c424d; }
.defs { position: absolute; width: 0; height: 0; }
.i { width: 16px; height: 16px; }
.b { stroke: #1a74c4; }
.r { stroke: #f00; }
.tri { fill: #4a4a4a; stroke: none; }

.window {
  display: flex;
  flex-direction: column;
  height: 100%;
  padding: 0 7px 6px;
  border: 1px solid #555b60;
  border-top-color: #b7bdc3;
  border-radius: 8px 8px 6px 6px;
  background: linear-gradient(#b4bcc5 0, #c5d5df 60px, #c9d0d9 190px, #e2e4e6 260px, #e5e5e7 940px, #d8d1cf 100%);
}

/* Title bar */
.titlebar {
  position: relative;
  display: flex;
  height: 36px;
  margin: 0 -7px;
  padding: 0 7px;
  border-radius: 7px 7px 0 0;
  border-bottom: 1px solid #e2e4e6;
  background:
    linear-gradient(rgba(225, 229, 234, 0) 10px, rgba(225, 229, 234, .8) 34px),
    linear-gradient(90deg, #c4c6c9 0, #d0cfcd 70px, #968c87 130px, #aaa29f 210px, #77706e 265px, #b9bbbe 310px, #9da4ae 370px, #5e6877 430px, #515b6b 520px, #8a909a 580px, #5e6878 660px, #67707e 760px, #2c3e5d 1020px, #8f7061 1130px, #c9ac98 1190px, #beb2ad 1240px, #d4d2d1 100%);
}
.app-button {
  position: absolute;
  z-index: 2;
  left: 8px;
  top: 7px;
  width: 41px;
  height: 41px;
  border: 1px solid #333;
  background: linear-gradient(#cfcfcf, #ababab 45%, #858585 55%, #a9a9a9);
}
.quick {
  width: 25px;
  height: 29px;
  margin: 7px 0 0 41px;
  border: 1px solid #666;
  background: linear-gradient(#b5b5b5, #8a8a8a);
}
.title {
  display: flex;
  flex: 1;
  gap: 32px;
  margin: 9px 0 0 108px;
  font-size: 14px;
  font-weight: 400;
  line-height: 20px;
  white-space: nowrap;
  color: #111;
}
.info {
  display: flex;
  align-items: center;
  height: 29px;
  margin-top: 7px;
  padding-right: 2px;
  border: 1px solid #595959;
  background: linear-gradient(#b0b0b0, #858585);
}
.info-arrow { width: 17px; height: 26px; }
.search {
  width: 225px;
  height: 27px;
  border: 1px solid #777;
  background: #f7f7f7;
  padding: 4px 2px 0;
  font-size: 14px;
  font-style: italic;
}
.search::placeholder { color: #777; opacity: 1; }
.info-btn { width: 30px; height: 26px; }
.info-btn .metal { fill: #e2e5e8; stroke: #41464d; }
.drop { width: 14px; height: 26px; }
.info-sep { width: 1px; height: 22px; margin: 0 6px; background: #626262; }
.sysbuttons {
  display: flex;
  height: 24px;
  margin: -1px 0 0 22px;
  border: 1px solid #777;
  border-top: 0;
  border-radius: 0 0 5px 5px;
  background: linear-gradient(rgba(255, 255, 255, .45), rgba(255, 255, 255, .2));
}
.sysbuttons button { width: 35px; border-right: 1px solid #8b8280; }
.sysbuttons .close { width: 58px; border: 0; }

/* Menu bar */
.menu {
  display: flex;
  align-items: center;
  gap: 14px;
  height: 27px;
  padding-left: 57px;
  border-top: 2px solid #333;
  background: linear-gradient(#a2a2a2, #555);
}
.menu a { color: #fff; text-decoration: none; white-space: nowrap; }
.menu a:first-child { margin-right: 6px; }
.menu a:nth-last-of-type(1) { margin-left: 4px; }
.doc-buttons { display: flex; gap: 5px; margin-left: auto; padding-right: 3px; }

/* Toolbars */
.toolbars { display: flex; gap: 26px; height: 28px; background: #666; }
.toolbar { display: flex; height: 24px; border: 1px solid #333; background: #ebebeb; }
.toolbar button { width: 23px; height: 22px; }
.grip { display: flex; width: 8px; padding: 3px 2px; background: #777; }
.grip::before { content: ""; flex: 1; background: conic-gradient(#111 25%, transparent 0) 0 0 / 2px 2px; }
.grip.wide { width: auto; height: 8px; padding: 2px 3px; background: #5c5c5c; }
.grip.wide::before { flex: 0 0 14px; }
.sep { width: 1px; height: 18px; margin: 2px 2px 2px 3px; background: #888; }
.hsep { height: 1px; margin: 2px 2px 3px; background: #999; }

/* Work area */
.work { display: flex; flex: 1; min-height: 0; align-items: flex-start; background: #666; }
.tools { display: flex; flex-direction: column; width: 25px; border: 1px solid #333; background: #ebebeb; }
.tools button { width: 23px; height: 22px; }
.drawing {
  display: flex;
  flex: 1;
  flex-direction: column;
  align-self: stretch;
  margin: 0 4px 4px;
  border: 2px solid #fff;
  border-top-color: #999;
  border-left-color: #999;
}
.canvas { position: relative; flex: 1; background: #fff; }
.cursor { position: absolute; left: 477px; top: 406px; }
.tabs {
  display: flex;
  height: 20px;
  border-top: 1px solid #555;
  background: #f0f0f0;
  font: 13px/18px Roboto, sans-serif;
}
.nav { width: 19px; border-right: 1px solid #999; border-bottom: 1px solid #999; }
.nav:nth-child(4) { width: 20px; }
.tab { padding: 0 6px; border-bottom: 1px solid #555; }
.tab.active { background: #fff; padding: 0 8px; border-color: #fff; }
.panel { display: flex; flex-direction: column; width: 86px; height: 542px; background: #ebebeb; }
.panel-body { display: flex; flex: 1; align-items: flex-end; padding: 0 3px 2px; }

/* Command window */
.command { display: flex; height: 72px; background: #fff; }
.command-grip { width: 16px; padding: 3px 2px; background: #a0a0a0; }
.command-grip span { display: block; height: 4px; background: conic-gradient(#111 25%, transparent 0) 0 0 / 2px 2px; }
.command-main { display: flex; flex: 1; flex-direction: column; font: 17px/20px "Liberation Mono", monospace; }
.history { display: flex; height: 50px; border-bottom: 1px solid #999; }
.log { flex: 1; padding: 1px 0 0 1px; }
.log p { margin: 0; }
.vscroll { display: flex; flex-direction: column; align-items: center; justify-content: space-between; width: 20px; padding: 8px 0; background: #f0f0f0; }
.prompt { display: flex; flex: 1; align-items: center; padding: 1px 0 0 1px; }
.prompt input { flex: 1; min-width: 0; height: 20px; outline: 0; }
.hscroll { display: flex; align-items: center; justify-content: space-between; width: 84px; height: 21px; padding: 0 9px; background: #f0f0f0; }
.thumb {
  width: 19px;
  height: 19px;
  margin-right: 18px;
  border: 1px solid #999;
  border-radius: 2px;
  padding: 4px 5px;
  background: repeating-linear-gradient(90deg, #555 0 1px, transparent 1px 3px) content-box, linear-gradient(#f5f5f5, #cfcfcf);
}
.corner { width: 21px; height: 21px; margin-left: 1px; background: #f0f0f0; }

/* Status bar */
.status {
  display: flex;
  height: 23px;
  border-top: 1px solid #000;
  border-bottom: 1px solid #666;
  background: linear-gradient(#999, #777);
  font: 13px/18px "Liberation Sans", sans-serif;
}
.coords { width: 132px; padding: 2px 0 0 13px; font: 12px/18px Roboto, sans-serif; white-space: nowrap; }
.group { display: flex; border-left: 1px solid #555; margin-left: 10px; }
.coords + .group { margin-left: 0; }
.group.right { margin-left: auto; }
.group.near { margin-left: 4px; }
.group button { width: 22px; border-right: 1px solid #555; background: linear-gradient(#bdbdbd, #999); }
.group .on { background: linear-gradient(#e3f5fb, #90cddf 50%, #b5e2ee); }
.group .text { width: 61px; }
.group .scale { width: 54px; gap: 3px; }
.group .bulb { width: 26px; background: #888; border: 1px solid #444; }
.group .mini { width: 11px; }
.resize { display: flex; align-items: flex-end; justify-content: flex-end; width: 21px; }
```
